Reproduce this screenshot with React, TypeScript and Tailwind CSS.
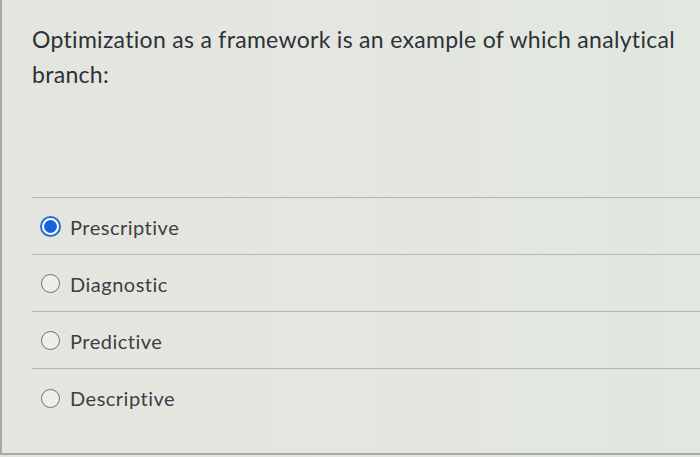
import { useState } from 'react';

const answers = ['Prescriptive', 'Diagnostic', 'Predictive', 'Descriptive'];

function Radio({ checked }: { checked: boolean }) {
  if (checked) {
    return (
      <span className="flex h-[21px] w-[21px] shrink-0 items-center justify-center rounded-full border-[2px] border-[#2a6ccf] bg-white">
        <span className="h-[13px] w-[13px] rounded-full bg-[#1763d8]" />
      </span>
    );
  }
  return <span className="h-[19px] w-[19px] shrink-0 rounded-full border-[1.5px] border-[#6e7271] bg-[#eeeeea]" />;
}

export default function App() {
  const [selected, setSelected] = useState('Prescriptive');

  return (
    <div className="relative h-[457px] w-full overflow-hidden bg-gradient-to-r from-[#e5e5df] via-[#e4e6df] to-[#e1e8e0] font-['Lato','Noto_Sans',sans-serif]">
      <div className="flex h-[455px] flex-col border-b-[2px] border-l-[2px] border-[#a9aaa5]">
        <div className="h-[197px] pl-[30px] pt-[22px]">
          <p className="whitespace-nowrap text-[23px] leading-[35px] tracking-[0.3px] text-[#2d3138]">
            Optimization as a framework is an example of which analytical
            <br />
            branch:
          </p>
        </div>
        <ul className="ml-[30px] border-t border-[#b4b8b2]">
          {answers.map((a, i) => (
            <li
              key={a}
              className={
                i < answers.length - 1
                  ? 'flex h-[57px] items-center gap-[9px] border-b border-[#b4b8b2] pl-[7px] pt-[1px]'
                  : 'flex h-[57px] items-center gap-[9px] pl-[7px] pt-[1px]'
              }
              onClick={() => setSelected(a)}
            >
              <span className="flex w-[22px] justify-center">
                <Radio checked={selected === a} />
              </span>
              <span className="text-[20px] leading-[24px] tracking-[0.5px] text-[#3b3f44]">{a}</span>
            </li>
          ))}
        </ul>
      </div>
    </div>
  );
}
